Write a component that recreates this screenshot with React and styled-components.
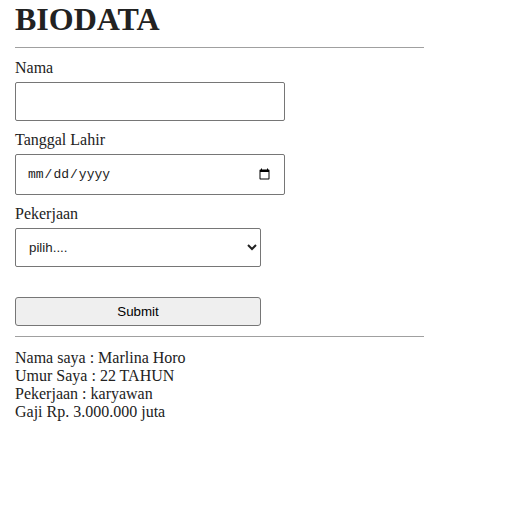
import React, { useState } from 'react';
import styled, { createGlobalStyle } from 'styled-components';

const GlobalStyle = createGlobalStyle`
    html, body {
        margin: 0;
        padding: 0;
        background: #fff;
    }
    body {
        font-family: "Liberation Serif", "Times New Roman", serif;
        color: #222;
    }
`

const Page = styled.div`
    padding: 1px 15px 0 15px;
    width: 409px;
`

const Title = styled.h1`
    margin: 0;
    font-size: 32px;
    line-height: 37px;
    font-weight: bold;
`

const Line = styled.hr`
    margin: ${props => props.mt || '8px'} 0 ${props => props.mb || '8px'} 0;
    border: none;
    border-top: 1px solid #a0a0a0;
    height: 0;
`

const Form = styled.form`
    display: flex;
    flex-direction: column;
    align-items: flex-start;
`

const Label = styled.label`
    display: block;
    font-size: 16px;
    line-height: 18px;
    margin-top: ${props => props.mt || '0px'};
    margin-bottom: 5px;
`

const TextInput = styled.input`
    box-sizing: border-box;
    width: 270px;
    height: 39px;
    border: 1px solid #767676;
    border-radius: 2px;
    padding: 0 12px;
    font-size: 14px;
    font-family: "Liberation Sans", Arial, sans-serif;
    background: #fff;
`

const DateInput = styled.input`
    box-sizing: border-box;
    width: 270px;
    height: 41px;
    border: 1px solid #767676;
    border-radius: 2px;
    padding: 0 11px;
    font-size: 13px;
    font-family: "Liberation Mono", "Courier New", monospace;
    color: #222;
    background: #fff;
`

const Select = styled.select`
    box-sizing: border-box;
    width: 246px;
    height: 39px;
    border: 1px solid #767676;
    border-radius: 2px;
    padding: 0 9px;
    font-size: 13.33px;
    font-family: "Liberation Sans", Arial, sans-serif;
    color: #222;
    background: #fff;
`

const Button = styled.button`
    box-sizing: border-box;
    width: 246px;
    height: 29px;
    margin-top: 30px;
    border: 1px solid #767676;
    border-radius: 3px;
    background: #efefef;
    font-size: 13.33px;
    font-family: "Liberation Sans", Arial, sans-serif;
    color: #000;
    cursor: pointer;
`

const Result = styled.div`
    font-size: 16px;
    line-height: 18px;
`

export default function App() {
    const [nama, setNama] = useState('');
    const [tanggal, setTanggal] = useState('');
    const [kerja, setKerja] = useState('');

    function handleSubmit(e) {
        e.preventDefault();
    }

    return (
        <Page>
            <GlobalStyle />
            <Title>BIODATA</Title>
            <Line mt="9px" mb="11px" />
            <Form onSubmit={handleSubmit}>
                <Label>Nama</Label>
                <TextInput type="text" value={nama} onChange={e => setNama(e.target.value)} />
                <Label mt="10px">Tanggal Lahir</Label>
                <DateInput type="date" value={tanggal} onChange={e => setTanggal(e.target.value)} />
                <Label mt="10px">Pekerjaan</Label>
                <Select value={kerja} onChange={e => setKerja(e.target.value)}>
                    <option value="">pilih....</option>
                    <option value="karyawan">karyawan</option>
                    <option value="wiraswasta">wiraswasta</option>
                </Select>
                <Button type="submit">Submit</Button>
            </Form>
            <Line mt="10px" mb="12px" />
            <Result>
                <div>Nama saya : Marlina Horo</div>
                <div>Umur Saya : 22 TAHUN</div>
                <div>Pekerjaan : karyawan</div>
                <div>Gaji Rp. 3.000.000 juta</div>
            </Result>
        </Page>
    );
}
